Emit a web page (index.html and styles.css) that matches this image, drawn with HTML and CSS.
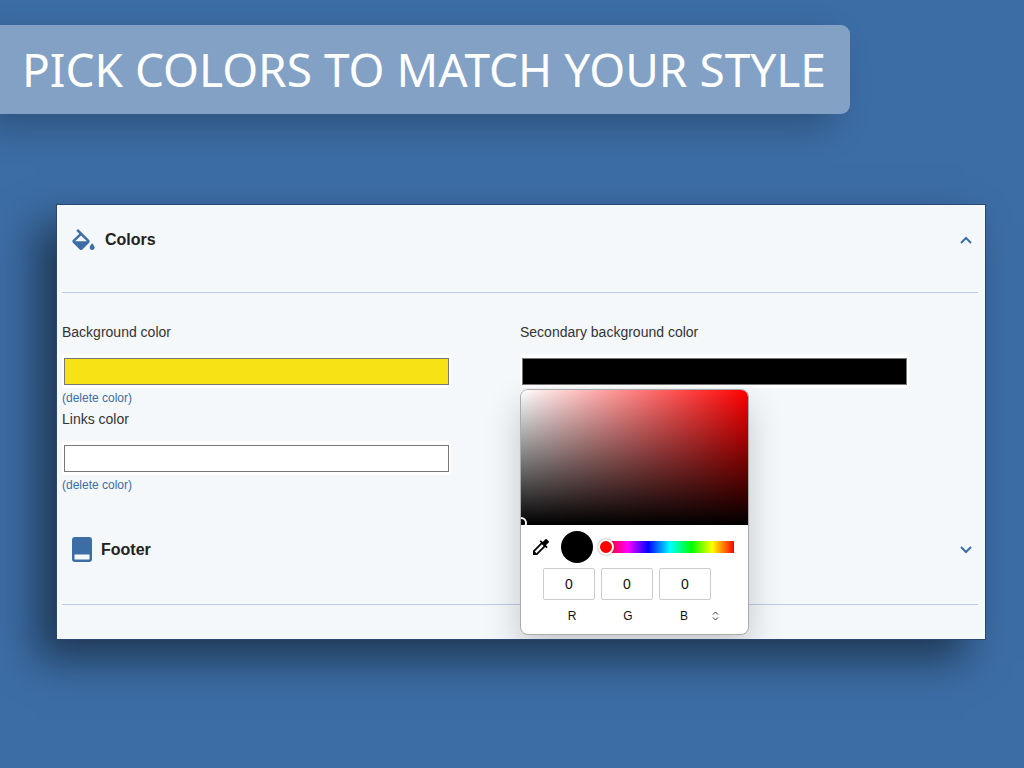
FILE: index.html
```html
<!DOCTYPE html>
<html lang="en">
<head>
<meta charset="utf-8">
<meta name="viewport" content="width=device-width, initial-scale=1">
<title>Pick colors to match your style</title>
<link rel="stylesheet" href="styles.css">
</head>
<body>
<header class="banner">
  <h1 class="banner-title">PICK COLORS TO MATCH YOUR STYLE</h1>
</header>
<main class="panel">
  <section class="section">
    <h2 class="section-heading">
      <button class="section-toggle" type="button" aria-expanded="true">
        <svg class="icon-fill" viewBox="3 0 18 17" aria-hidden="true"><path d="M16.56 8.94L7.62 0 6.21 1.41l2.38 2.38-5.15 5.15c-.59.59-.59 1.54 0 2.12l5.5 5.5c.29.29.68.44 1.06.44s.77-.15 1.06-.44l5.5-5.5c.59-.58.59-1.53 0-2.12zM5.21 10L10 5.21 14.79 10H5.21zM19 11.5s-2 2.17-2 3.5c0 1.1.9 2 2 2s2-.9 2-2c0-1.33-2-3.5-2-3.5z"/></svg>
        <span class="section-name">Colors</span>
        <svg class="chevron" viewBox="0 0 12 8" aria-hidden="true"><path d="M1 7l5-5 5 5"/></svg>
      </button>
    </h2>
    <div class="fields">
      <div class="field">
        <label class="field-label" for="background">Background color</label>
        <input class="swatch" type="color" id="background" value="#f7e215">
        <a class="delete" href="#">(delete color)</a>
      </div>
      <div class="field">
        <label class="field-label" for="secondary">Secondary background color</label>
        <input class="swatch" type="color" id="secondary" value="#000000">
        <div class="picker">
          <div class="spectrum"><span class="spectrum-handle"></span></div>
          <div class="picker-tools">
            <button class="dropper" type="button" aria-label="Pick from screen">
              <svg viewBox="3 3 18 18" aria-hidden="true"><path d="M20.71 5.63l-2.34-2.34a1 1 0 0 0-1.41 0l-3.12 3.12-1.93-1.91-1.41 1.41 1.42 1.42L3 16.25V21h4.75l8.92-8.92 1.42 1.42 1.41-1.41-1.92-1.92 3.12-3.12c.4-.4.4-1.03.01-1.42zM6.92 19L5 17.08l8.06-8.06 1.92 1.92L6.92 19z"/></svg>
            </button>
            <span class="preview"></span>
            <input class="hue" type="range" min="0" max="360" value="0" aria-label="Hue">
          </div>
          <div class="channels">
            <input class="channel" id="red" type="text" value="0">
            <input class="channel" id="green" type="text" value="0">
            <input class="channel" id="blue" type="text" value="0">
          </div>
          <div class="channel-names">
            <label for="red">R</label>
            <label for="green">G</label>
            <label for="blue">B</label>
            <button class="format" type="button" aria-label="Change format">
              <svg viewBox="0 0 7 10" aria-hidden="true"><path d="M1 3.500l2.500-2.500L6 3.500M1 6.500L3.500 9 6 6.500"/></svg>
            </button>
          </div>
        </div>
      </div>
      <div class="field">
        <label class="field-label" for="links">Links color</label>
        <input class="swatch" type="color" id="links" value="#ffffff">
        <a class="delete" href="#">(delete color)</a>
      </div>
    </div>
  </section>
  <section class="section">
    <h2 class="section-heading section-heading-last">
      <button class="section-toggle" type="button" aria-expanded="false">
        <svg class="icon-footer" viewBox="0 0 20 25" aria-hidden="true"><path fill-rule="evenodd" d="M3 0h14a3 3 0 0 1 3 3v19a3 3 0 0 1-3 3H3a3 3 0 0 1-3-3V3a3 3 0 0 1 3-3zM2.500 17.500v5h15v-5z"/></svg>
        <span class="section-name">Footer</span>
        <svg class="chevron" viewBox="0 0 12 8" aria-hidden="true"><path d="M1 1l5 5 5-5"/></svg>
      </button>
    </h2>
  </section>
</main>
</body>
</html>
```
FILE: styles.css
```css
* {
  box-sizing: border-box;
}

body {
  margin: 0;
  min-height: 100vh;
  padding: 25px 0 40px;
  overflow-x: hidden;
  background: #3c6da5;
  color: #222;
  font-family: "Liberation Sans", Arial, sans-serif;
}

button {
  border: 0;
  padding: 0;
  background: none;
  color: inherit;
  font: inherit;
}

.banner {
  width: fit-content;
  padding: 14px 24px 15px 22px;
  border-radius: 0 9px 9px 0;
  background: #82a1c5;
  box-shadow: -16px 14px 36px rgba(0, 0, 0, 0.24);
}

.banner-title {
  margin: 0;
  color: #fff;
  font: 400 46px/60px "Noto Sans", "Open Sans", sans-serif;
}

.panel {
  margin: 91px 39px 0 57px;
  padding: 0 7px 34px 5px;
  outline: 1px solid #28486f;
  background: #f4f8fb;
  box-shadow: -20px 20px 40px rgba(0, 0, 0, 0.5);
}

.section-heading {
  margin: 0;
  padding-bottom: 18px;
  border-bottom: 1px solid #bccfe6;
}

.section-heading-last {
  padding-bottom: 20px;
}

.section-toggle {
  display: flex;
  align-items: center;
  width: 100%;
  height: 69px;
  padding: 0 6px 0 10px;
  font-size: 16px;
  font-weight: 700;
  text-align: left;
}

.section-toggle svg {
  flex: none;
  fill: #3c6da5;
}

.section-toggle .icon-fill {
  width: 23px;
  height: 21px;
  margin-right: 10px;
}

.section-toggle .icon-footer {
  width: 20px;
  height: 25px;
  margin-right: 9px;
}

.section-name {
  flex: 1;
}

.section-toggle .chevron {
  width: 12px;
  height: 8px;
  fill: none;
  stroke: #3c6da5;
  stroke-width: 2;
}

.fields {
  display: grid;
  grid-template-columns: 1fr 1fr;
  padding: 29px 0 19px;
}

.field {
  position: relative;
  min-height: 87px;
}

.field-label {
  display: block;
  margin-bottom: 12px;
  color: #333;
  font-size: 14px;
  line-height: 20px;
}

.swatch {
  display: block;
  width: 85%;
  height: 34px;
  border: 0;
  padding: 4px 2px 3px;
  background: #fff;
}

.swatch::-webkit-color-swatch-wrapper {
  padding: 0;
}

.swatch::-webkit-color-swatch {
  border: 1px solid #777;
  border-radius: 0;
}

.delete {
  display: block;
  width: fit-content;
  color: #3c6da5;
  font-size: 12px;
  line-height: 21px;
  text-decoration: none;
}

.picker {
  position: absolute;
  top: 67px;
  left: 0;
  z-index: 1;
  width: 229px;
  border: 1px solid #a9abad;
  border-radius: 8px;
  overflow: hidden;
  background: #fff;
  box-shadow: 0 16px 36px rgba(0, 0, 0, 0.2);
  clip-path: inset(-60px -60px -4px -60px);
}

.spectrum {
  position: relative;
  height: 135px;
  overflow: hidden;
  background:
    linear-gradient(to top, #000, transparent),
    linear-gradient(to right, #fff, #f00);
}

.spectrum-handle {
  position: absolute;
  bottom: -4px;
  left: -6px;
  width: 12px;
  height: 12px;
  border: 2px solid #fff;
  border-radius: 50%;
}

.picker-tools {
  display: flex;
  align-items: center;
  height: 43px;
  padding: 0 14px 0 12px;
}

.dropper {
  width: 16px;
  height: 16px;
  margin-right: 12px;
}

.dropper svg {
  display: block;
  width: 100%;
}

.preview {
  width: 32px;
  height: 32px;
  margin-right: 5px;
  border-radius: 50%;
  background: #000;
}

.hue {
  flex: 1;
  min-width: 0;
  height: 18px;
  margin: 0;
  appearance: none;
  background: linear-gradient(to right, #f00, #f0f 17%, #00f 33%, #0ff 50%, #0f0 67%, #ff0 83%, #f00) 8px 3px / calc(100% - 8px) 12px no-repeat;
}

.hue::-webkit-slider-thumb {
  width: 16px;
  height: 16px;
  appearance: none;
  border: 2px solid #fff;
  border-radius: 50%;
  background: #f00;
  box-shadow: 0 0 2px rgba(0, 0, 0, 0.5);
}

.channels {
  display: flex;
  gap: 6px;
  padding-left: 22px;
}

.channel {
  width: 52px;
  height: 32px;
  border: 1px solid #ccc;
  border-radius: 2px;
  padding: 0;
  color: #111;
  font: 14px "Liberation Sans", Arial, sans-serif;
  text-align: center;
}

.channel-names {
  display: grid;
  grid-template-columns: 56px 56px 56px 7px;
  align-items: center;
  height: 34px;
  padding: 0 0 2px 23px;
  color: #111;
  font-size: 12px;
  text-align: center;
}

.format svg {
  display: block;
  width: 7px;
  height: 10px;
  fill: none;
  stroke: #333;
}
```
